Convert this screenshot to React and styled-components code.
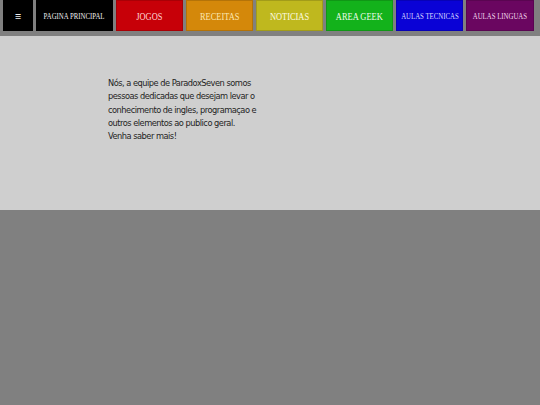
import styled, { createGlobalStyle } from "styled-components";

const GlobalStyle = createGlobalStyle`
  html, body {
    margin: 0;
    padding: 0;
    background: #808080;
  }
`;

const Page = styled.div`
  display: flex;
  flex-direction: column;
  min-height: 405px;
  background: #808080;
`;

const NavBar = styled.nav`
  display: flex;
  gap: 3px;
  padding: 0 3px 5px 3px;
  background: #808080;
`;

const NavButton = styled.a`
  display: flex;
  align-items: center;
  justify-content: center;
  width: ${({ $width }) => $width || 67}px;
  height: 31px;
  padding-top: 1px;
  background: ${({ $bg }) => $bg};
  color: ${({ $color }) => $color || "#fff"};
  font-family: "Liberation Serif", "Times New Roman", serif;
  font-size: ${({ $size }) => $size || 10}px;
  font-weight: ${({ $bold }) => ($bold ? 700 : 400)};
  text-decoration: none;
  white-space: nowrap;
  overflow: hidden;
  box-sizing: border-box;
  box-shadow: inset 0 0 0 1px rgba(0, 0, 0, 0.15);
`;

const Label = styled.span`
  display: inline-block;
  transform: scaleX(${({ $scale }) => $scale || 0.8});
`;

const Intro = styled.section`
  background: #cfcfcf;
  height: 174px;
  padding: 40px 0 0 108px;
  box-sizing: border-box;
`;

const IntroText = styled.p`
  margin: 0;
  width: 152px;
  font-family: "DejaVu Sans Condensed", "DejaVu Sans", sans-serif;
  font-size: 9.2px;
  letter-spacing: -0.5px;
  line-height: 13.3px;
  color: #1e1e1e;
`;

const items = [
  { label: "≡", bg: "#000", width: 30, size: 11, color: "#eee", bold: true, scale: 1 },
  { label: "PAGINA PRINCIPAL", bg: "#000", width: 77, size: 8.5, color: "#eee" },
  { label: "JOGOS", bg: "#c70008", size: 10.5, color: "#ffd6d6" },
  { label: "RECEITAS", bg: "#d4880a", size: 10.5, color: "#fbe7b0" },
  { label: "NOTICIAS", bg: "#bfb81e", size: 10.5, color: "#fdfbe0" },
  { label: "AREA GEEK", bg: "#13b21b", size: 10.5, color: "#eafbe8" },
  { label: "AULAS TECNICAS", bg: "#0a02d6", size: 8.5, color: "#dcdcff" },
  { label: "AULAS LINGUAS", bg: "#6a0660", width: 68, size: 8.5, color: "#f3d8ef" },
];

export default function App() {
  return (
    <Page>
      <GlobalStyle />
      <NavBar>
        {items.map((it) => (
          <NavButton
            key={it.label}
            href="#"
            $bg={it.bg}
            $width={it.width}
            $size={it.size}
            $color={it.color}
            $bold={it.bold}
          >
            <Label $scale={it.scale}>{it.label}</Label>
          </NavButton>
        ))}
      </NavBar>
      <Intro>
        <IntroText>
          Nós, a equipe de ParadoxSeven somos pessoas dedicadas que desejam
          levar o conhecimento de ingles, programaçao e outros elementos ao
          publico geral.
          <br />
          Venha saber mais!
        </IntroText>
      </Intro>
    </Page>
  );
}
